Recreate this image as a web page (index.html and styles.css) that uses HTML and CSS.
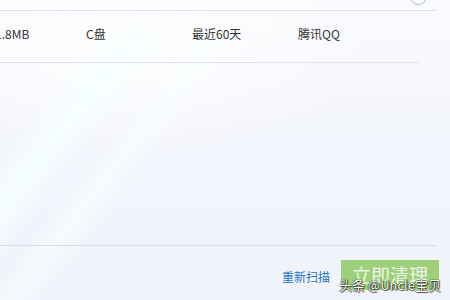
FILE: index.html
```
<!DOCTYPE html>
<html>
<head>
<meta charset="utf-8">
<link rel="stylesheet" href="styles.css">
</head>
<body>
<div class="page">
  <div class="rays"></div>
  <div class="topline"></div>
  <span class="check"></span>
  <div class="row">
    <span class="cell c1">1.8MB</span>
    <span class="cell c2">C盘</span>
    <span class="cell c3">最近60天</span>
    <span class="cell c4">腾讯QQ</span>
  </div>
  <div class="list-space"></div>
  <div class="footer">
    <a class="rescan">重新扫描</a>
    <button class="clean">立即清理</button>
  </div>
  <div class="watermark">头条 @Uncle宝贝</div>
</div>
</body>
</html>
```
FILE: styles.css
```
html, body {
  margin: 0;
  padding: 0;
}
body {
  font-family: "Noto Sans CJK SC", "Noto Sans", sans-serif;
  color: #333;
}
.page {
  position: relative;
  width: 450px;
  height: 300px;
  overflow: hidden;
  background:
    radial-gradient(ellipse 260px 120px at 120px 40px, rgba(255,255,255,0.85), rgba(255,255,255,0)),
    linear-gradient(180deg, #fafbfe 0%, #f3f5fc 45%, #f1f3fb 100%);
}
.rays {
  position: absolute;
  left: -210px;
  top: 30px;
  width: 500px;
  height: 400px;
  background:
    linear-gradient(128deg, rgba(255,255,255,0) 38%, rgba(246,255,255,0.95) 43%, rgba(255,255,255,0) 48%),
    linear-gradient(128deg, rgba(255,255,255,0) 50%, rgba(250,255,255,0.6) 53%, rgba(255,255,255,0) 57%);
  pointer-events: none;
}
.topline {
  position: relative;
  height: 10px;
  margin-right: 13px;
  border-bottom: 1px solid #dde1ea;
}
.check {
  position: absolute;
  left: 410px;
  top: -12px;
  width: 15px;
  height: 15px;
  border: 1.5px solid #a8b6d0;
  border-radius: 50%;
}
.row {
  position: relative;
  display: grid;
  grid-template-columns: 91px 106px 106px 100px;
  align-items: center;
  height: 51px;
  margin-right: 31px;
  margin-left: -5px;
  border-bottom: 1px solid #dfe3ec;
  font-size: 12px;
}
.cell {
  line-height: 1;
  margin-top: -6px;
}
.list-space {
  position: relative;
  height: 182px;
  margin-right: 14px;
  border-bottom: 1px solid #d9dde7;
}
.footer {
  position: relative;
  display: flex;
  justify-content: flex-end;
  align-items: flex-start;
  padding-top: 14px;
  padding-right: 11px;
}
.rescan {
  margin-top: 2px;
  line-height: 30px;
  font-size: 12px;
  color: #2476c4;
  margin-right: 11px;
}
.clean {
  width: 98px;
  height: 30px;
  border: 0;
  padding: 0;
  background: #9ed07b;
  color: #eef7e6;
  font-family: "Noto Sans CJK SC", sans-serif;
  font-size: 19px;
  line-height: 30px;
}
.watermark {
  position: absolute;
  right: 9px;
  bottom: 8px;
  font-size: 13px;
  line-height: 14px;
  color: #fff;
  text-shadow: 0 0 1px #000, 0 0 1px #000, 1px 1px 1px rgba(0,0,0,0.6);
  font-family: "Noto Sans CJK SC", sans-serif;
}
```
